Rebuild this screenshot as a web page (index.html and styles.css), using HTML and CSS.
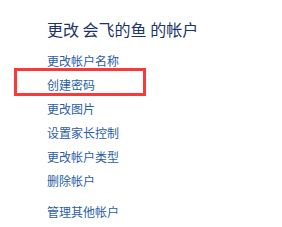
FILE: index.html
```html
<!DOCTYPE html>
<html lang="zh-CN">
<head>
    <meta charset="UTF-8">
    <title>更改帐户</title>
    <link rel="stylesheet" href="styles.css">
</head>
<body>
    <div class="panel">
        <h2 class="title">更改 会飞的鱼 的帐户</h2>

        <ul class="tasks">
            <li><a href="#">更改帐户名称</a></li>
            <li><a href="#">创建密码</a></li>
            <li><a href="#">更改图片</a></li>
            <li><a href="#">设置家长控制</a></li>
            <li><a href="#">更改帐户类型</a></li>
            <li><a href="#">删除帐户</a></li>
        </ul>

        <ul class="tasks other">
            <li><a href="#">管理其他帐户</a></li>
        </ul>

        <!-- 标注框 -->
        <div class="mark"></div>
    </div>
</body>
</html>
```

FILE: styles.css
```css
* {
    margin: 0;
    padding: 0;
    box-sizing: border-box;
}

body {
    font-family: "Noto Sans CJK SC", "Noto Sans", sans-serif;
    background-color: #fff;
    width: 282px;
    height: 227px;
    overflow: hidden;
}

.panel {
    position: relative;
    padding: 18px 0 0 47px;
}

.title {
    font-size: 16px;
    font-weight: normal;
    line-height: 22px;
    color: #1c3566;
}

.tasks {
    list-style: none;
    margin-top: 9px;
}

.tasks li {
    font-size: 12px;
    line-height: 24px;
}

.tasks a {
    color: #2b5ea6;
    text-decoration: none;
}

.tasks.other {
    margin-top: 7px;
}

.mark {
    position: absolute;
    left: 14px;
    top: 68px;
    width: 132px;
    height: 28px;
    border: 3px solid #fa3a3a;
}
```
